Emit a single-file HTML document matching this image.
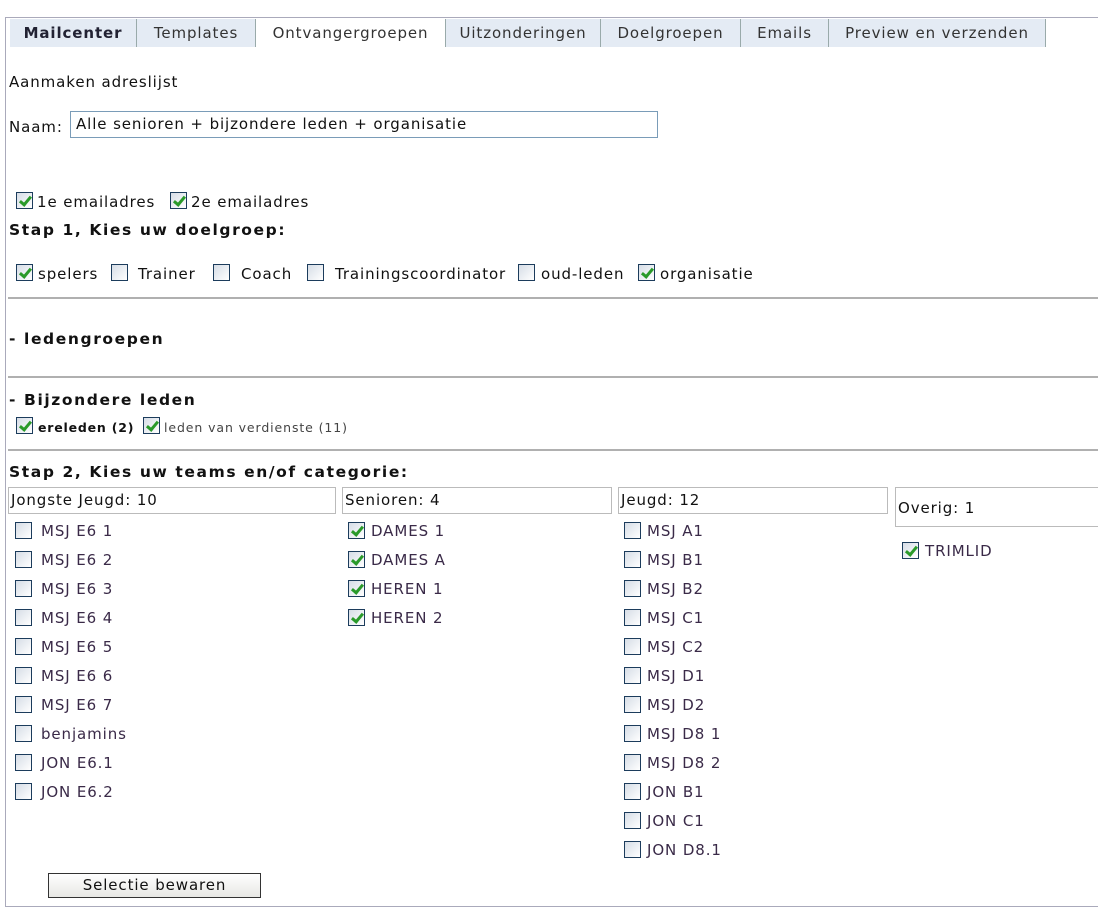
<html><head><style>
body{margin:0;width:1098px;height:910px;background:#fff;position:relative;overflow:hidden;font-family:"DejaVu Sans","Liberation Sans",sans-serif;font-size:15px;letter-spacing:0.9px;color:#111}
.a{position:absolute;white-space:nowrap}
.tab{position:absolute;top:19px;height:28px;line-height:28px;background:#e4ebf4;color:#333;font-size:15px;text-align:center;border-right:1px solid #9aa;box-sizing:border-box}
.cb{position:absolute;width:17px;height:17px;border:1px solid #1c3c5c;background:linear-gradient(135deg,#d6dde6,#fff);box-sizing:border-box}
.cb.c::after{content:"";position:absolute;left:5px;top:1px;width:4px;height:9px;border:solid #2a9a2a;border-width:0 3px 3px 0;transform:rotate(40deg)}
.hr{position:absolute;left:8px;right:0;height:2px;background:#b0b0b0}
.hd{position:absolute;border:1px solid #bbb;box-sizing:border-box;padding-left:2px}
.t{color:#3a2a48}
.bo{font-weight:bold;font-size:15.5px;letter-spacing:1.6px}
</style></head><body>
<div class="a" style="left:5px;top:17px;width:1093px;height:888px;border-left:1px solid #aab;border-top:1px solid #aab;border-bottom:1px solid #aab"></div>
<div class="tab" style="left:10px;width:127px;font-weight:bold;color:#223">Mailcenter</div>
<div class="tab" style="left:137px;width:119px">Templates</div>
<div class="tab" style="left:256px;width:190px;background:#fff">Ontvangergroepen</div>
<div class="tab" style="left:446px;width:155px">Uitzonderingen</div>
<div class="tab" style="left:601px;width:140px">Doelgroepen</div>
<div class="tab" style="left:741px;width:88px">Emails</div>
<div class="tab" style="left:829px;width:217px">Preview en verzenden</div>

<div class="a" style="left:9px;top:73px">Aanmaken adreslijst</div>
<div class="a" style="left:9px;top:118px">Naam:</div>
<div class="a" style="left:70px;top:111px;width:588px;height:27px;border:1px solid #7a9cb8;box-sizing:border-box;padding:3px 5px">Alle senioren + bijzondere leden + organisatie</div>

<div class="cb c" style="left:16px;top:192px"></div><div class="a" style="left:37px;top:193px">1e emailadres</div>
<div class="cb c" style="left:170px;top:192px"></div><div class="a" style="left:191px;top:193px">2e emailadres</div>
<div class="a bo" style="left:9px;top:221px">Stap 1, Kies uw doelgroep:</div>

<div class="cb c" style="left:16px;top:264px"></div><div class="a" style="left:38px;top:265px">spelers</div>
<div class="cb" style="left:111px;top:264px"></div><div class="a" style="left:138px;top:265px">Trainer</div>
<div class="cb" style="left:213px;top:264px"></div><div class="a" style="left:241px;top:265px">Coach</div>
<div class="cb" style="left:307px;top:264px"></div><div class="a" style="left:335px;top:265px">Trainingscoordinator</div>
<div class="cb" style="left:518px;top:264px"></div><div class="a" style="left:541px;top:265px">oud-leden</div>
<div class="cb c" style="left:638px;top:264px"></div><div class="a" style="left:660px;top:265px">organisatie</div>
<div class="hr" style="top:297px"></div>
<div class="a bo" style="left:9px;top:330px">- ledengroepen</div>
<div class="hr" style="top:376px"></div>
<div class="a bo" style="left:9px;top:391px">- Bijzondere leden</div>
<div class="cb c" style="left:16px;top:417px"></div><div class="a" style="left:38px;top:420px;font-size:12.5px;font-weight:bold;letter-spacing:0.8px">ereleden (2)</div>
<div class="cb c" style="left:143px;top:417px"></div><div class="a" style="left:164px;top:420px;font-size:12.5px;color:#444;letter-spacing:0.9px">leden van verdienste (11)</div>
<div class="hr" style="top:449px"></div>
<div class="a bo" style="left:9px;top:463px">Stap 2, Kies uw teams en/of categorie:</div>

<div class="hd" style="left:8px;top:487px;width:328px;height:27px;line-height:25px">Jongste Jeugd: 10</div>
<div class="hd" style="left:342px;top:487px;width:270px;height:27px;line-height:25px">Senioren: 4</div>
<div class="hd" style="left:618px;top:487px;width:270px;height:27px;line-height:25px">Jeugd: 12</div>
<div class="hd" style="left:895px;top:487px;width:210px;height:40px;line-height:40px">Overig: 1</div>

<div class="cb" style="left:15px;top:522px"></div><div class="a t" style="left:41px;top:522px">MSJ E6 1</div>
<div class="cb" style="left:15px;top:551px"></div><div class="a t" style="left:41px;top:551px">MSJ E6 2</div>
<div class="cb" style="left:15px;top:580px"></div><div class="a t" style="left:41px;top:580px">MSJ E6 3</div>
<div class="cb" style="left:15px;top:609px"></div><div class="a t" style="left:41px;top:609px">MSJ E6 4</div>
<div class="cb" style="left:15px;top:638px"></div><div class="a t" style="left:41px;top:638px">MSJ E6 5</div>
<div class="cb" style="left:15px;top:667px"></div><div class="a t" style="left:41px;top:667px">MSJ E6 6</div>
<div class="cb" style="left:15px;top:696px"></div><div class="a t" style="left:41px;top:696px">MSJ E6 7</div>
<div class="cb" style="left:15px;top:725px"></div><div class="a t" style="left:41px;top:725px">benjamins</div>
<div class="cb" style="left:15px;top:754px"></div><div class="a t" style="left:41px;top:754px">JON E6.1</div>
<div class="cb" style="left:15px;top:783px"></div><div class="a t" style="left:41px;top:783px">JON E6.2</div>

<div class="cb c" style="left:348px;top:522px"></div><div class="a t" style="left:371px;top:522px">DAMES 1</div>
<div class="cb c" style="left:348px;top:551px"></div><div class="a t" style="left:371px;top:551px">DAMES A</div>
<div class="cb c" style="left:348px;top:580px"></div><div class="a t" style="left:371px;top:580px">HEREN 1</div>
<div class="cb c" style="left:348px;top:609px"></div><div class="a t" style="left:371px;top:609px">HEREN 2</div>

<div class="cb" style="left:624px;top:522px"></div><div class="a t" style="left:647px;top:522px">MSJ A1</div>
<div class="cb" style="left:624px;top:551px"></div><div class="a t" style="left:647px;top:551px">MSJ B1</div>
<div class="cb" style="left:624px;top:580px"></div><div class="a t" style="left:647px;top:580px">MSJ B2</div>
<div class="cb" style="left:624px;top:609px"></div><div class="a t" style="left:647px;top:609px">MSJ C1</div>
<div class="cb" style="left:624px;top:638px"></div><div class="a t" style="left:647px;top:638px">MSJ C2</div>
<div class="cb" style="left:624px;top:667px"></div><div class="a t" style="left:647px;top:667px">MSJ D1</div>
<div class="cb" style="left:624px;top:696px"></div><div class="a t" style="left:647px;top:696px">MSJ D2</div>
<div class="cb" style="left:624px;top:725px"></div><div class="a t" style="left:647px;top:725px">MSJ D8 1</div>
<div class="cb" style="left:624px;top:754px"></div><div class="a t" style="left:647px;top:754px">MSJ D8 2</div>
<div class="cb" style="left:624px;top:783px"></div><div class="a t" style="left:647px;top:783px">JON B1</div>
<div class="cb" style="left:624px;top:812px"></div><div class="a t" style="left:647px;top:812px">JON C1</div>
<div class="cb" style="left:624px;top:841px"></div><div class="a t" style="left:647px;top:841px">JON D8.1</div>

<div class="cb c" style="left:902px;top:542px"></div><div class="a t" style="left:925px;top:542px">TRIMLID</div>

<div class="a" style="left:48px;top:873px;width:213px;height:25px;border:1px solid #333;box-sizing:border-box;background:linear-gradient(#fff,#e8e8e4);text-align:center;line-height:23px">Selectie bewaren</div>
</body></html>
